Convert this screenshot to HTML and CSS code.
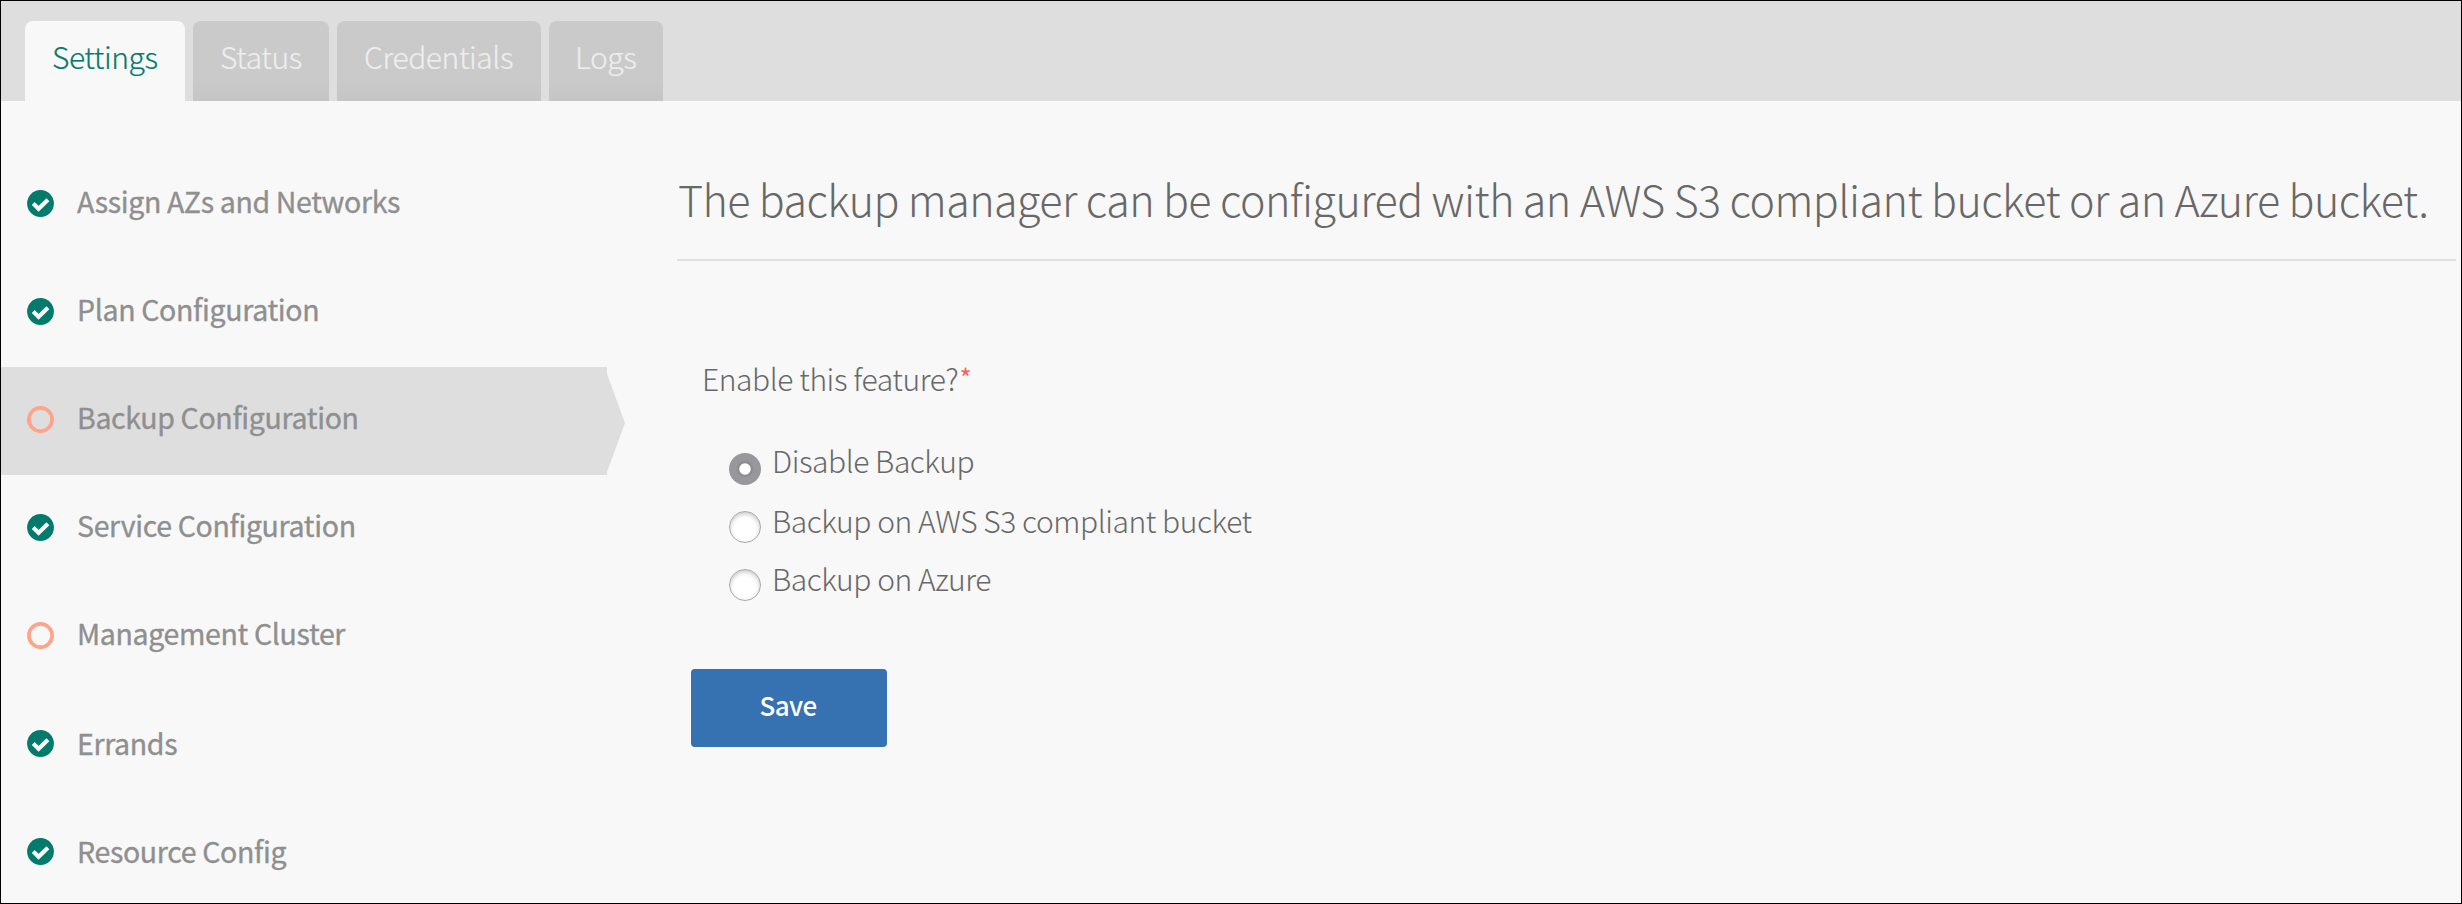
FILE: index.html
```
<!DOCTYPE html>
<html lang="en">
<head>
<meta charset="utf-8">
<title>Backup Configuration</title>
<link rel="stylesheet" href="styles.css">
</head>
<body>
<svg width="0" height="0" class="defs">
  <symbol id="done" viewBox="0 0 27 27"><circle cx="13.5" cy="13.5" r="13.4" fill="#027a6c"/><path d="M6.2 13.6l5.4 5.2 9.3-9" fill="none" stroke="#f8f8f8" stroke-width="4.2"/></symbol>
  <symbol id="todo" viewBox="0 0 27 27"><circle cx="13.5" cy="13.5" r="11.6" fill="none" stroke="#ffa389" stroke-width="3.7"/></symbol>
</svg>
<div class="page">
  <header class="tabs">
    <a class="tab active w1">Settings</a>
    <a class="tab w2">Status</a>
    <a class="tab w3">Credentials</a>
    <a class="tab w4">Logs</a>
  </header>
  <div class="body">
    <nav class="side">
      <a class="item"><svg class="icon"><use href="#done"/></svg><span>Assign AZs and Networks</span></a>
      <a class="item"><svg class="icon"><use href="#done"/></svg><span>Plan Configuration</span></a>
      <a class="item current"><svg class="icon"><use href="#todo"/></svg><span>Backup Configuration</span></a>
      <a class="item"><svg class="icon"><use href="#done"/></svg><span>Service Configuration</span></a>
      <a class="item"><svg class="icon"><use href="#todo"/></svg><span>Management Cluster</span></a>
      <a class="item low"><svg class="icon"><use href="#done"/></svg><span>Errands</span></a>
      <a class="item low"><svg class="icon"><use href="#done"/></svg><span>Resource Config</span></a>
    </nav>
    <main class="main">
      <h1 class="title"><span>The backup manager can be configured with an AWS S3 compliant bucket or an Azure bucket.</span></h1>
      <form class="form">
        <div class="question"><span>Enable this feature?</span><span class="star">*</span></div>
        <label class="option first"><i class="radio on"></i><span>Disable Backup</span></label>
        <label class="option"><i class="radio"></i><span>Backup on AWS S3 compliant bucket</span></label>
        <label class="option"><i class="radio"></i><span>Backup on Azure</span></label>
        <button class="save" type="button">Save</button>
      </form>
    </main>
  </div>
</div>
</body>
</html>
```
FILE: styles.css
```
* { box-sizing: border-box; }
body {
  margin: 0;
  font-family: "Noto Sans CJK SC", "Noto Sans", sans-serif;
  font-weight: 300;
  color: #686868;
}
.defs { display: block; }
.page {
  width: 2462px;
  height: 904px;
  border: 1px solid #000;
  background: #f8f8f8;
  overflow: hidden;
}
.tabs {
  display: flex;
  align-items: flex-end;
  gap: 8px;
  height: 100px;
  padding-left: 24px;
  background: #dedede;
}
.tab {
  height: 80px;
  padding-left: 27px;
  border-radius: 8px 8px 0 0;
  background: linear-gradient(#cacaca 70%, #c5c5c5);
  color: #eee;
  font-size: 30px;
  letter-spacing: -.42px;
  line-height: 70px;
  -webkit-text-stroke: .2px currentColor;
  white-space: nowrap;
}
.tab.active { background: #f8f8f8; color: #067a6c; }
.w1 { width: 160px; }
.w2 { width: 136px; }
.w3 { width: 204px; }
.w4 { width: 114px; padding-left: 26px; }
.body { display: flex; }
.side { width: 606px; padding-top: 50px; }
.item {
  display: flex;
  align-items: flex-start;
  gap: 23px;
  height: 108px;
  padding-left: 26px;
  color: #8f8f8f;
  font-size: 28.5px;
  font-weight: 400;
  letter-spacing: -.34px;
  -webkit-text-stroke: .35px #8f8f8f;
  line-height: 99px;
  white-space: nowrap;
}
.low { line-height: 103px; }
.icon { flex: none; width: 27px; height: 27px; margin-top: 39px; }
.current { position: relative; background: #dedede; }
.current::after {
  content: "";
  position: absolute;
  left: 606px;
  top: 7px;
  width: 18px;
  height: 98px;
  background: #dedede;
  clip-path: polygon(0 0, 100% 50%, 0 100%);
}
.main { width: 1779px; margin-left: 70px; }
.title {
  height: 160px;
  margin: 0;
  padding: 60px 0 0 1px;
  border-bottom: 2px solid #e0e0e0;
  font-size: 43px;
  font-weight: 300;
  letter-spacing: -.55px;
  line-height: 74px;
  white-space: nowrap;
}
.form { padding-left: 14px; }
.question {
  display: flex;
  height: 118px;
  margin-left: 11px;
  padding-top: 87px;
  font-size: 30px;
  letter-spacing: -.42px;
  line-height: 60px;
}
.star {
  margin-left: 1px;
  color: #ff5f50;
  font-size: 26px;
  font-weight: 400;
  line-height: 58px;
}
.option {
  display: flex;
  align-items: flex-start;
  gap: 11px;
  height: 58px;
  margin-left: 38px;
  font-size: 30px;
  letter-spacing: -.45px;
  line-height: 47px;
}
.option.first { margin-top: 60px; line-height: 43px; }
.radio {
  flex: none;
  width: 32px;
  height: 32px;
  margin-top: 14px;
  border: 1px solid #a8a8a8;
  border-radius: 50%;
  background: #fff;
  box-shadow: inset 0 2px 4px rgba(0, 0, 0, .22);
}
.radio.on {
  border: 0;
  background: radial-gradient(circle, #fff 5.2px, #88878c 6.2px, #98979c 9px);
  box-shadow: none;
}
.save {
  display: block;
  width: 196px;
  height: 78px;
  margin-top: 56px;
  padding: 0 2px 6px 0;
  border: 0;
  border-radius: 4px;
  background: #3671b2;
  color: #fff;
  font: 500 26px/70px "Noto Sans CJK SC", sans-serif;
  letter-spacing: -.6px;
}
```
